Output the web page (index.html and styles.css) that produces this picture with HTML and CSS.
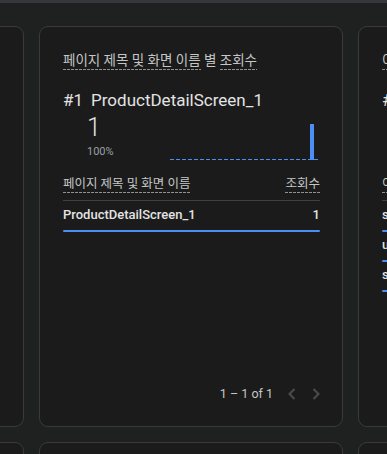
FILE: index.html
```html
<!DOCTYPE html>
<html lang="ko">
<head>
  <meta charset="UTF-8" />
  <meta name="viewport" content="width=device-width, initial-scale=1.0"/>
  <title>조회수</title>
  <link rel="stylesheet" href="styles.css">
</head>
<body>
<div class="topbar"></div>
<div class="grid">
  <div class="card"></div>

  <div class="card">
    <div class="card-title"><span class="dash">페이지 제목 및 화면 이름</span> 별 <span class="dash">조회수</span></div>
    <div class="rank"><span class="rank-no">#1</span>ProductDetailScreen_1</div>
    <div class="stat-row">
      <div class="stat">
        <div class="stat-value">1</div>
        <div class="stat-pct">100%</div>
      </div>
      <div class="chart"><div class="chart-bar"></div></div>
    </div>
    <div class="table-head">
      <span class="dash">페이지 제목 및 화면 이름</span>
      <span class="dash">조회수</span>
    </div>
    <div class="table-row">
      <div class="row-text"><span>ProductDetailScreen_1</span><span>1</span></div>
      <div class="row-bar" style="width: 100%"></div>
    </div>
    <div class="pager">
      <span class="pager-text">1 – 1 of 1</span>
      <svg class="chev" width="24" height="24" viewBox="0 0 24 24"><path d="M14.5 7 9.5 12l5 5" fill="none" stroke="currentColor" stroke-width="2"/></svg>
      <svg class="chev" width="24" height="24" viewBox="0 0 24 24"><path d="M9.5 7l5 5-5 5" fill="none" stroke="currentColor" stroke-width="2"/></svg>
    </div>
  </div>

  <div class="card">
    <div class="card-title"><span class="dash">이벤트 이름</span> 별 <span class="dash">이벤트 수</span></div>
    <div class="rank"><span class="rank-no">#1</span>screen_view</div>
    <div class="stat-row">
      <div class="stat">
        <div class="stat-value">12</div>
        <div class="stat-pct">40%</div>
      </div>
      <div class="chart"></div>
    </div>
    <div class="table-head">
      <span class="dash">이벤트 이름</span>
      <span class="dash">이벤트 수</span>
    </div>
    <div class="table-row">
      <div class="row-text"><span>screen_view</span><span>12</span></div>
      <div class="row-bar" style="width: 100%"></div>
    </div>
    <div class="table-row">
      <div class="row-text"><span>user_engagement</span><span>9</span></div>
      <div class="row-bar" style="width: 75%"></div>
    </div>
    <div class="table-row">
      <div class="row-text"><span>session_start</span><span>5</span></div>
      <div class="row-bar" style="width: 42%"></div>
    </div>
  </div>

  <div class="card"></div>
  <div class="card"></div>
  <div class="card"></div>
</div>
</body>
</html>
```
FILE: styles.css
```css
body {
  margin: 0;
  background: #1f2120;
  font-family: Roboto, "Noto Sans CJK KR", sans-serif;
  color: #e3e3e3;
  overflow: hidden;
  height: 454px;
}
.topbar {
  height: 3px;
  background: #35373a;
}
.grid {
  display: grid;
  grid-template-columns: repeat(3, 304px);
  gap: 15px;
  margin-left: -280px;
  padding-top: 23px;
}
.card {
  background: #1b1b1b;
  border: 1px solid #393a3a;
  border-radius: 9px;
  height: 401px;
  padding: 23px 22px 20px 23px;
  box-sizing: border-box;
  display: flex;
  flex-direction: column;
  overflow: hidden;
}
.card-title {
  font-size: 13.5px;
  line-height: 20px;
  color: #c4c7c5;
  white-space: nowrap;
}
.dash {
  display: inline-block;
  line-height: 17px;
  padding-bottom: 1px;
  background: repeating-linear-gradient(to right, #8e918f 0 3px, transparent 3px 4px) left bottom / 100% 1px no-repeat;
}
.rank {
  margin-top: 18px;
  font-size: 17px;
  line-height: 24px;
  white-space: nowrap;
}
.rank-no {
  margin-right: 8px;
}
.stat-row {
  display: flex;
  align-items: flex-end;
  margin-top: 2px;
}
.stat {
  margin-left: 24px;
  width: 83px;
}
.stat-value {
  font-size: 25px;
  font-weight: 300;
  line-height: 28px;
}
.stat-pct {
  margin-top: 2px;
  font-size: 11px;
  line-height: 16px;
  color: #9aa0a6;
}
.chart {
  width: 149px;
  height: 36px;
  display: flex;
  justify-content: flex-end;
  align-items: flex-end;
  padding-right: 5px;
  box-sizing: border-box;
  background: repeating-linear-gradient(to right, #4b8ff5 0 4px, transparent 4px 6px) left bottom / 100% 1px no-repeat;
}
.chart-bar {
  width: 4px;
  height: 36px;
  background: #4b8ff5;
}
.table-head {
  margin-top: 15px;
  margin-bottom: 1px;
  display: flex;
  justify-content: space-between;
  font-size: 12.5px;
  line-height: 18px;
  color: #c4c7c5;
  padding-bottom: 7px;
  border-bottom: 1px solid #3f4040;
  white-space: nowrap;
}
.table-row {
  padding-top: 4px;
}
.row-text {
  display: flex;
  justify-content: space-between;
  font-size: 13px;
  font-weight: 500;
  line-height: 18px;
  white-space: nowrap;
}
.row-bar {
  margin-top: 6px;
  height: 2px;
  background: #4b8ff5;
  border-radius: 1px;
}
.pager {
  margin-top: auto;
  margin-right: -8px;
  display: flex;
  justify-content: flex-end;
  align-items: center;
  font-size: 12.5px;
  line-height: 18px;
  color: #c4c7c5;
}
.pager-text {
  margin-right: 7px;
}
.chev {
  color: #4a4c4e;
}
```
